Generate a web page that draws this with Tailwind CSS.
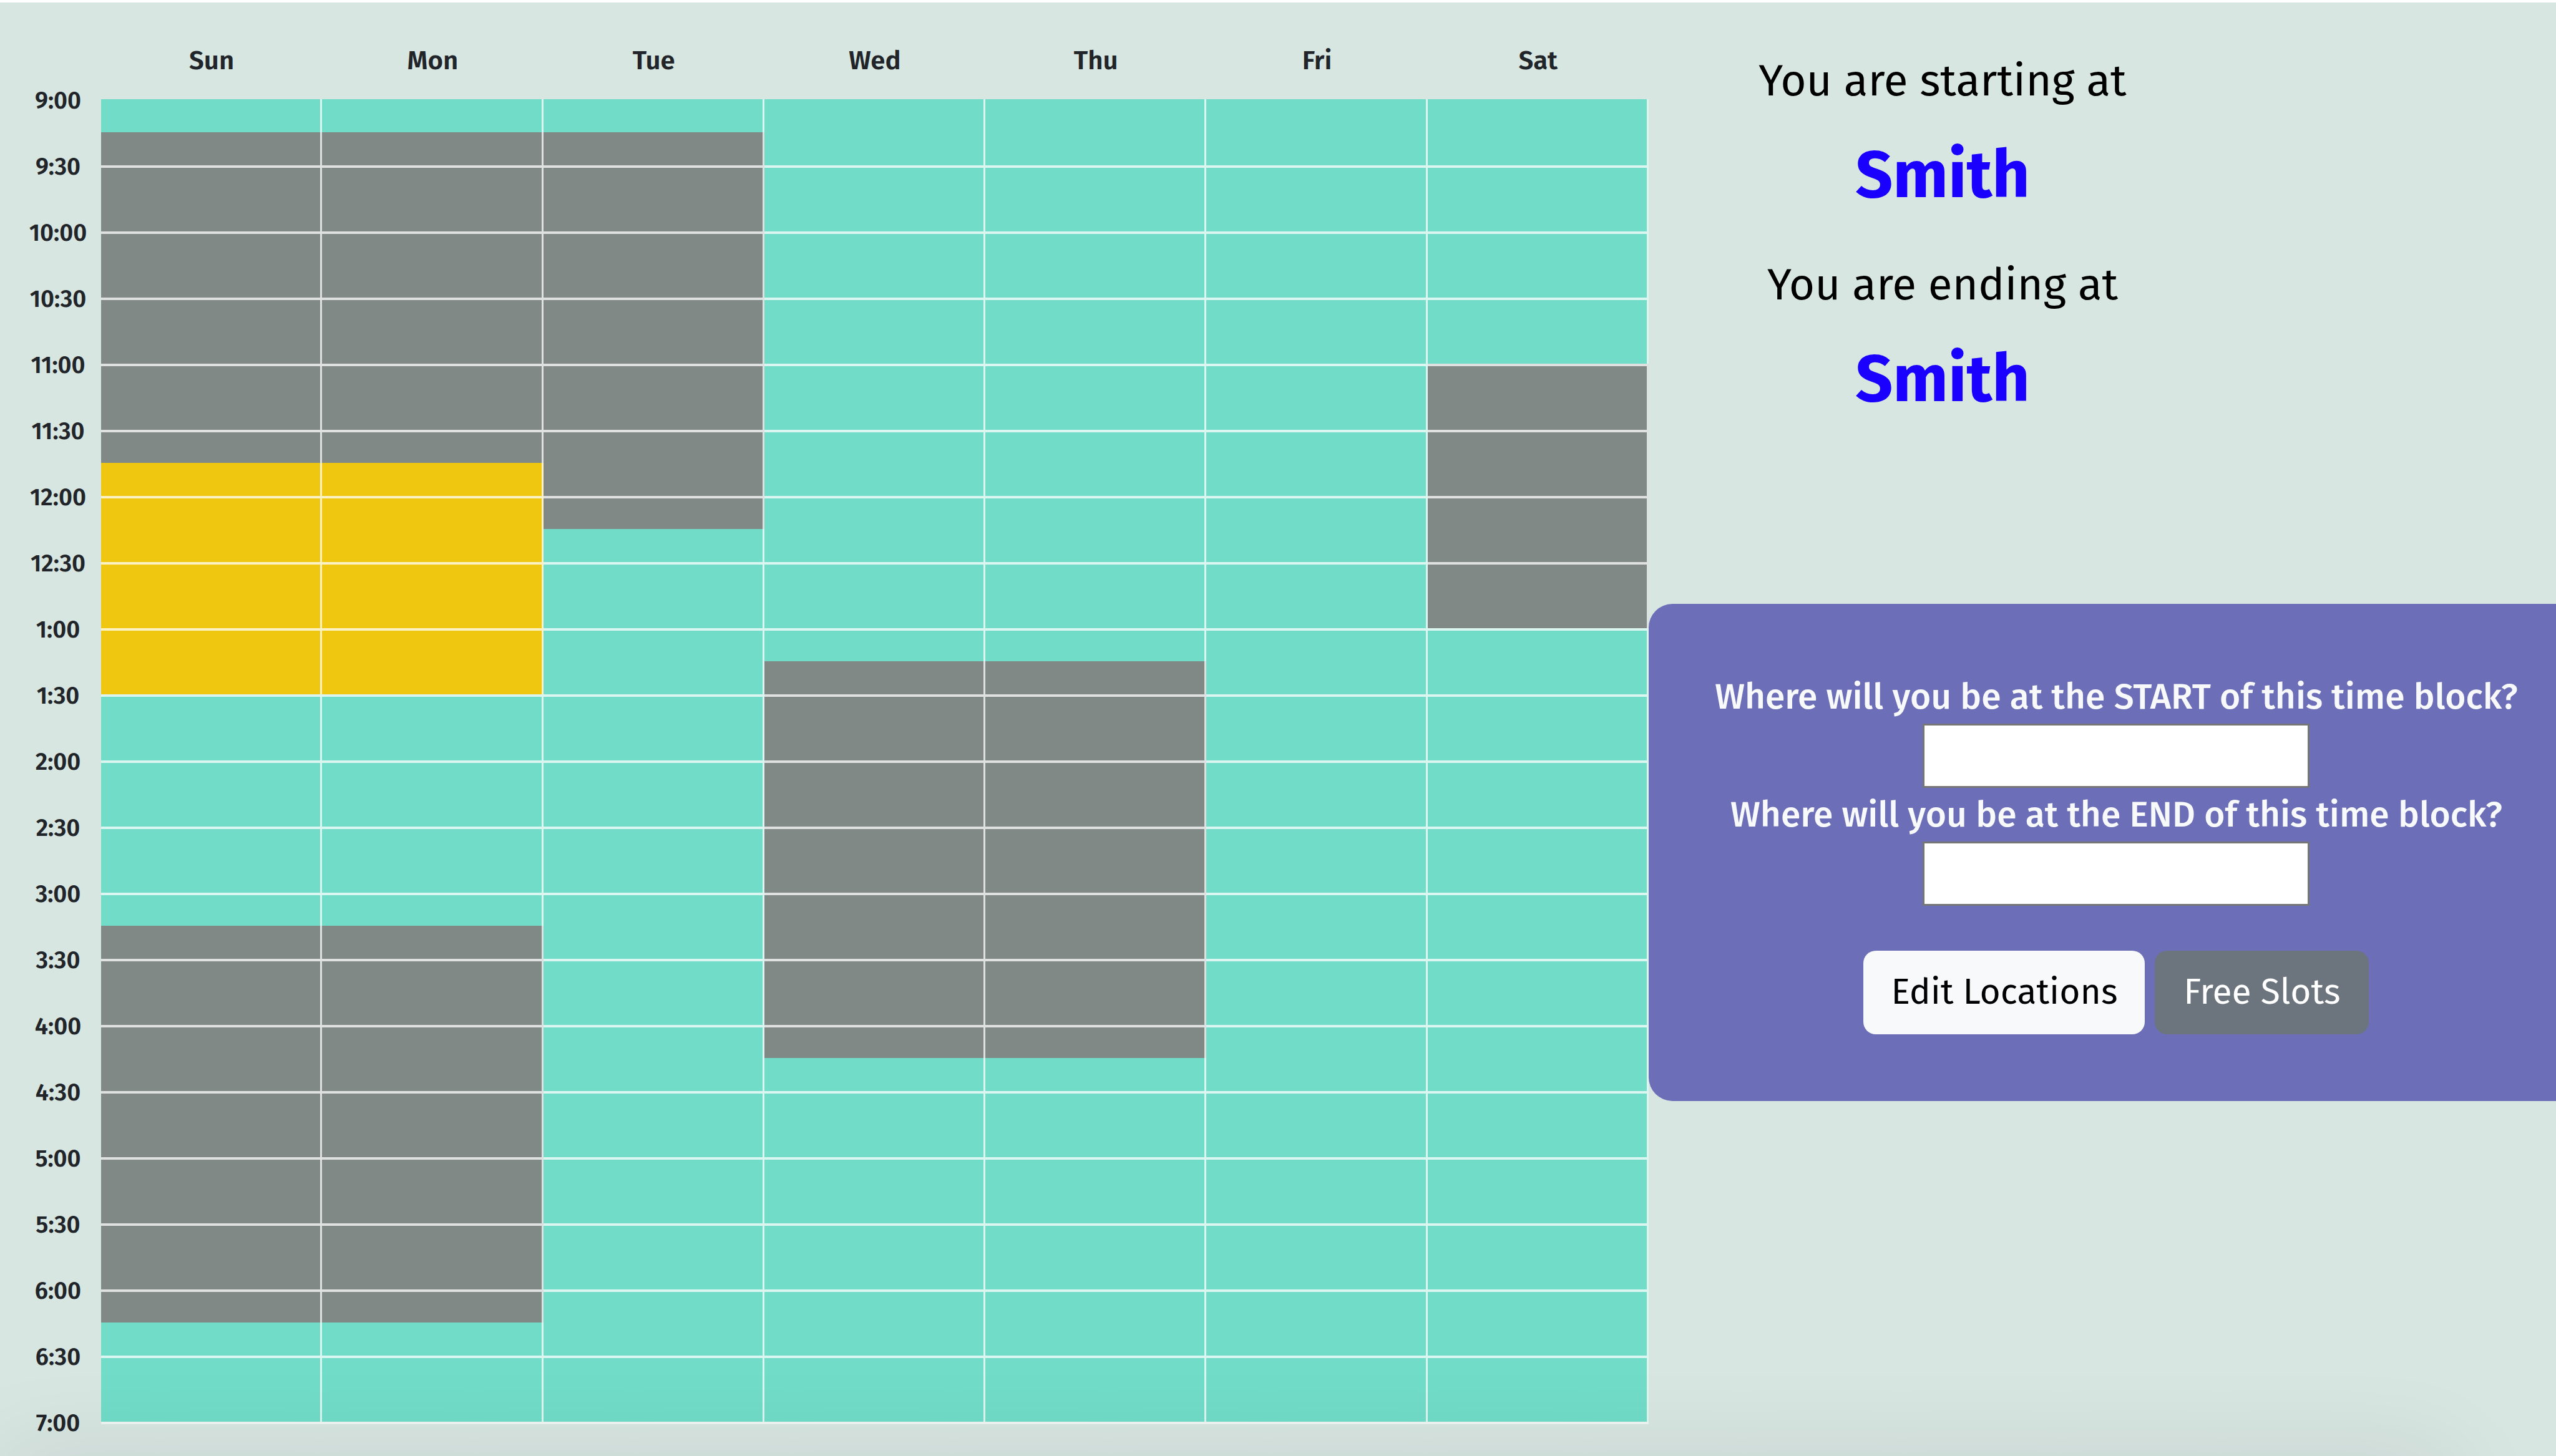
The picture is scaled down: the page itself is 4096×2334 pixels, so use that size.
<!DOCTYPE html>
<html lang="en">
<head>
<meta charset="utf-8">
<title>Weekly schedule</title>
<script src="https://cdn.jsdelivr.net/npm/@tailwindcss/browser@4"></script>
</head>
<body class="bg-[#d8e6e2] font-['Trebuchet_MS','Fira_Sans',Lato,sans-serif] text-[#212529]">
<div class="relative flex min-h-screen items-start overflow-hidden border-t-4 border-white">

  <table class="w-[64.5%] table-fixed border-separate border-spacing-0">
    <colgroup>
      <col class="w-[162px]"><col><col><col><col><col><col><col>
    </colgroup>
    <tbody id="schedule">
      <tr id="days" class="h-[102px]">
        <td></td>
      </tr>
    </tbody>
  </table>

  <main class="flex-1">
    <section class="w-[64.8%] pt-[84px] text-center text-black">
      <h2 class="text-[71px] leading-[84px]">You are starting at</h2>
      <p class="mt-[46px] text-[105px] leading-[126px] font-bold text-[#1900ff]">Smith</p>
      <h2 class="mt-[71px] text-[71px] leading-[84px]">You are ending at</h2>
      <p class="mt-[46px] text-[105px] leading-[126px] font-bold text-[#1900ff]">Smith</p>
    </section>

    <form class="mt-[297px] flex flex-col items-center rounded-l-[38px] bg-[#6c6fb8] pt-[106px] pb-[107px] pl-[45px] text-[57px] text-[#f8f9fa]">
      <label for="start" class="leading-[86px] font-medium whitespace-nowrap">Where will you be at the START of this time block?</label>
      <input id="start" type="text" class="h-[103px] w-[620px] border-3 border-[#767676] bg-white px-4 text-black">
      <label for="end" class="leading-[86px] font-medium whitespace-nowrap">Where will you be at the END of this time block?</label>
      <input id="end" type="text" class="h-[103px] w-[620px] border-3 border-[#767676] bg-white px-4 text-black">
      <div class="mt-[72px] flex gap-4">
        <button type="button" class="h-[134px] w-[451px] rounded-[20px] bg-[#f8f9fa] text-black">Edit Locations</button>
        <button type="button" class="h-[134px] w-[343px] rounded-[20px] bg-[#6c757d] text-white">Free Slots</button>
      </div>
    </form>
  </main>

  <div class="pointer-events-none absolute top-full right-[150px] left-0 h-24 rounded-tr-[80px] shadow-[0_0_150px_rgb(0_0_0/0.1)]"></div>
</div>

<script>
const days = ['Sun', 'Mon', 'Tue', 'Wed', 'Thu', 'Fri', 'Sat'];

// Blocks per day as [kind, first quarter hour, end quarter hour], counted from 9:00.
const blocks = {
  Sun: [['busy', 1, 11], ['picked', 11, 18], ['busy', 25, 37]],
  Mon: [['busy', 1, 11], ['picked', 11, 18], ['busy', 25, 37]],
  Tue: [['busy', 1, 13]],
  Wed: [['busy', 17, 29]],
  Thu: [['busy', 17, 29]],
  Fri: [],
  Sat: [['busy', 8, 16]],
};
const fill = { free: 'bg-[#71dcc8]', busy: 'bg-[#818986]', picked: 'bg-[#efc710]' };
const QUARTERS = 40;

// A time label spans the quarter before its line and the quarter after it.
const label = n => {
  const minutes = 540 + n * 15;
  const hour = (Math.floor(minutes / 60) + 11) % 12 + 1;
  return `<th scope="row" rowspan="2" class="pt-1 pr-0 pb-0 pl-6 align-middle text-[38px] leading-none font-semibold">${hour}:${String(minutes % 60).padStart(2, '0')}</th>`;
};
const kindAt = (day, q) => (blocks[day].find(([, a, b]) => q >= a && q < b) || ['free'])[0];

document.getElementById('days').insertAdjacentHTML('beforeend', days.map(d =>
  `<th scope="col" rowspan="2" class="px-0 pt-[68px] pb-0 align-top text-[42px] leading-[50px] font-semibold">${d}</th>`).join(''));

let rows = `<tr class="h-[53px]">${label(0)}</tr>`;
for (let q = 0; q < QUARTERS; q++) {
  const line = q % 2 === 0 && q > 0 ? 'border-t-4' : '';
  const cells = days.map(d => `<td class="border-r-3 border-white/75 p-0 ${line} ${fill[kindAt(d, q)]}"></td>`).join('');
  rows += `<tr class="h-[53px]">${q % 2 ? label(q + 1) : ''}${cells}</tr>`;
}
rows += `<tr class="h-[53px]">${days.map(() => '<td class="border-t-4 border-white/60 p-0"></td>').join('')}</tr>`;
document.getElementById('schedule').insertAdjacentHTML('beforeend', rows);
</script>
</body>
</html>
